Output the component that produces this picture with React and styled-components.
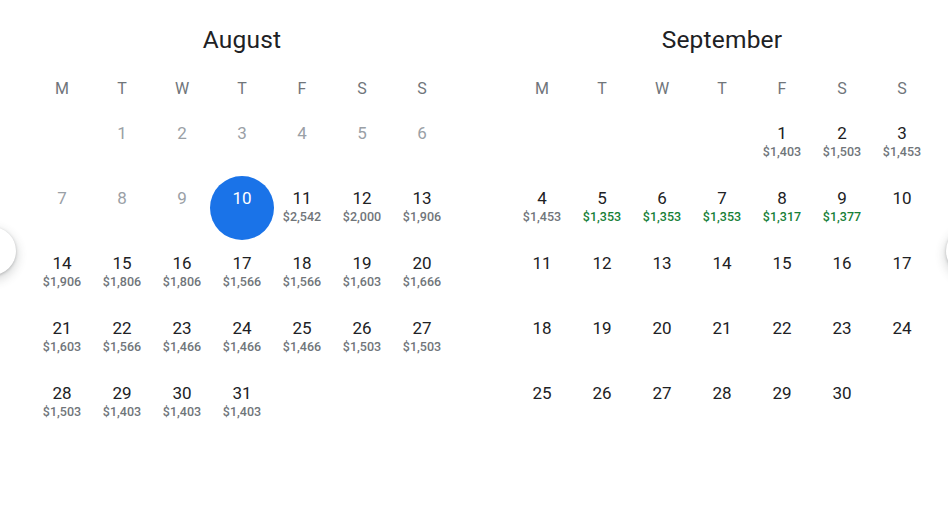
import React from 'react'
import styled, { createGlobalStyle } from 'styled-components';

const GlobalStyle = createGlobalStyle`
    body {
        margin: 0;
        background: #fff;
        font-family: Roboto, "Liberation Sans", sans-serif;
    }
`;

const Page = styled.div`
    position: relative;
    width: 948px;
    height: 510px;
    overflow: hidden;
    background: #fff;
`;

const Months = styled.div`
    display: flex;
    gap: 60px;
    padding: 20px 0 0 32px;
`;

const Month = styled.div`
    width: 420px;
`;

const Title = styled.div`
    height: 40px;
    line-height: 40px;
    text-align: center;
    font-size: 24.5px;
    color: #202124;
    letter-spacing: 0.2px;
`;

const Grid = styled.div`
    display: grid;
    grid-template-columns: repeat(7, 60px);
`;

const WeekDays = styled(Grid)`
    margin-top: 6px;
    height: 44px;
    align-items: center;
`;

const WeekDay = styled.div`
    text-align: center;
    font-size: 16px;
    color: #70757a;
`;

const Cell = styled.div`
    position: relative;
    height: 65px;
    display: flex;
    flex-direction: column;
    align-items: center;
    padding-top: 14px;
    box-sizing: border-box;

    ${p => p.$selected && `
        &::before {
            content: '';
            position: absolute;
            left: 50%;
            top: 50%;
            width: 64px;
            height: 64px;
            margin: -32px 0 0 -32px;
            border-radius: 50%;
            background: #1a73e8;
        }
    `}
`;

const DayNum = styled.span`
    position: relative;
    font-size: 17px;
    line-height: 18px;
    color: ${p => p.$selected ? '#fff' : p.$past ? '#9aa0a6' : '#202124'};
`;

const Price = styled.span`
    margin-top: 3px;
    font-size: 12.5px;
    line-height: 14px;
    font-weight: 500;
    color: ${p => p.$low ? '#188038' : '#70757a'};
`;

const EdgeButton = styled.div`
    position: absolute;
    top: 227px;
    width: 48px;
    height: 48px;
    border-radius: 50%;
    background: #fff;
    box-shadow: 0 1px 3px rgba(60, 64, 67, 0.3), 0 4px 8px 3px rgba(60, 64, 67, 0.15);
    ${p => p.$side === 'left' ? 'left: -32px;' : 'right: -46px;'}
`;

const weekDays = ['M', 'T', 'W', 'T', 'F', 'S', 'S'];

const august = {
    name: 'August',
    offset: 1,
    days: 31,
    today: 10,
    prices: {
        11: '$2,542', 12: '$2,000', 13: '$1,906', 14: '$1,906', 15: '$1,806', 16: '$1,806',
        17: '$1,566', 18: '$1,566', 19: '$1,603', 20: '$1,666', 21: '$1,603', 22: '$1,566',
        23: '$1,466', 24: '$1,466', 25: '$1,466', 26: '$1,503', 27: '$1,503', 28: '$1,503',
        29: '$1,403', 30: '$1,403', 31: '$1,403',
    },
    low: [],
};

const september = {
    name: 'September',
    offset: 4,
    days: 30,
    prices: {
        1: '$1,403', 2: '$1,503', 3: '$1,453', 4: '$1,453', 5: '$1,353', 6: '$1,353',
        7: '$1,353', 8: '$1,317', 9: '$1,377',
    },
    low: [5, 6, 7, 8, 9],
};

const MonthView = ({ data }) => {
    const blanks = Array.from({ length: data.offset });
    const days = Array.from({ length: data.days }, (_, i) => i + 1);
    return (
        <Month>
            <Title>{data.name}</Title>
            <WeekDays>
                {weekDays.map((d, i) => <WeekDay key={i}>{d}</WeekDay>)}
            </WeekDays>
            <Grid>
                {blanks.map((_, i) => <Cell key={'b' + i} />)}
                {days.map(d => {
                    const selected = d === data.today;
                    const past = data.today && d < data.today;
                    return (
                        <Cell key={d} $selected={selected}>
                            <DayNum $selected={selected} $past={past}>{d}</DayNum>
                            {data.prices[d] && (
                                <Price $low={data.low.includes(d)}>{data.prices[d]}</Price>
                            )}
                        </Cell>
                    );
                })}
            </Grid>
        </Month>
    );
};

const App = () => {
    return (
        <Page>
            <GlobalStyle />
            <Months>
                <MonthView data={august} />
                <MonthView data={september} />
            </Months>
            <EdgeButton $side="left" />
            <EdgeButton $side="right" />
        </Page>
    );
};

export default App
